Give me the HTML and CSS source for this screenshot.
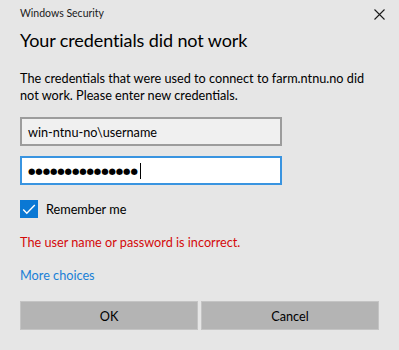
FILE: index.html
```html
<!DOCTYPE html>
<html>
<head>
    <meta charset="UTF-8">
    <title>Windows Security</title>
    <link rel="stylesheet" href="styles.css">
</head>
<body>
    <div class="titlebar">
        <span class="app-name">Windows Security</span>
        <svg class="close-icon" width="11" height="11" viewBox="0 0 11 11">
            <path d="M0.5 0.5 L10.5 10.5 M10.5 0.5 L0.5 10.5" stroke="#1a1a1a" stroke-width="1.1" fill="none"/>
        </svg>
    </div>

    <div class="content">
        <h1 class="heading">Your credentials did not work</h1>
        <p class="message">The credentials that were used to connect to farm.ntnu.no did not work. Please enter new credentials.</p>

        <div class="field field-user">win-ntnu-no\username</div>
        <div class="field field-pass">
            <span class="dots">●●●●●●●●●●●●●●●</span><span class="caret"></span>
        </div>

        <div class="remember">
            <span class="checkbox">
                <svg width="18" height="18" viewBox="0 0 18 18">
                    <path d="M3.2 9.6 L6.8 13.2 L14.8 5" stroke="#fff" stroke-width="1.4" fill="none"/>
                </svg>
            </span>
            <span>Remember me</span>
        </div>

        <div class="error">The user name or password is incorrect.</div>

        <a class="more-link" href="#">More choices</a>

        <div class="buttons">
            <button class="btn">OK</button>
            <button class="btn">Cancel</button>
        </div>
    </div>
</body>
</html>
```

FILE: styles.css
```css
body {
    margin: 0;
    background-color: #e6e6e6;
    font-family: Lato, "Open Sans", sans-serif;
    font-size: 12.7px;
    color: #000;
}
.titlebar {
    display: flex;
    justify-content: space-between;
    align-items: flex-start;
    height: 19px;
    padding: 5px 14px 0 20px;
}
.app-name {
    font-size: 10.5px;
    line-height: 16px;
    color: #1a1a1a;
}
.close-icon {
    margin-top: 4px;
}
.content {
    padding: 0 20px;
}
.heading {
    margin: 2px 0 0;
    font-size: 18px;
    line-height: 28px;
    letter-spacing: -0.1px;
    font-weight: normal;
}
.message {
    margin: 16px 0 0;
    line-height: 17px;
}
.field {
    box-sizing: border-box;
    width: 262px;
    height: 29px;
    padding: 0 6px;
    border: 2px solid #9c9c9c;
    background-color: #f0f0f0;
    display: flex;
    align-items: center;
}
.field-user {
    margin-top: 13px;
}
.field-pass {
    margin-top: 10px;
    border-color: #3994e0;
    background-color: #fff;
}
.dots {
    font-family: "DejaVu Sans", sans-serif;
    font-size: 8.5px;
    letter-spacing: -0.1px;
}
.caret {
    display: inline-block;
    width: 1px;
    height: 16px;
    margin-left: 2px;
    background-color: #000;
}
.remember {
    display: flex;
    align-items: center;
    gap: 8px;
    margin-top: 15px;
    height: 18px;
}
.checkbox {
    display: block;
    width: 18px;
    height: 18px;
    background-color: #0a78d4;
}
.checkbox svg {
    display: block;
}
.error {
    margin-top: 16px;
    line-height: 17px;
    color: #d40a0a;
}
.more-link {
    display: block;
    margin-top: 16px;
    line-height: 17px;
    color: #1a7fd6;
    text-decoration: none;
}
.buttons {
    display: grid;
    grid-template-columns: 1fr 1fr;
    gap: 3px;
    width: 359px;
    margin-top: 17px;
}
.btn {
    height: 29px;
    border: 1px solid #c4c4c4;
    background-color: #b4b4b4;
    font-family: inherit;
    font-size: 12.7px;
    color: #000;
    padding: 0;
}
```
